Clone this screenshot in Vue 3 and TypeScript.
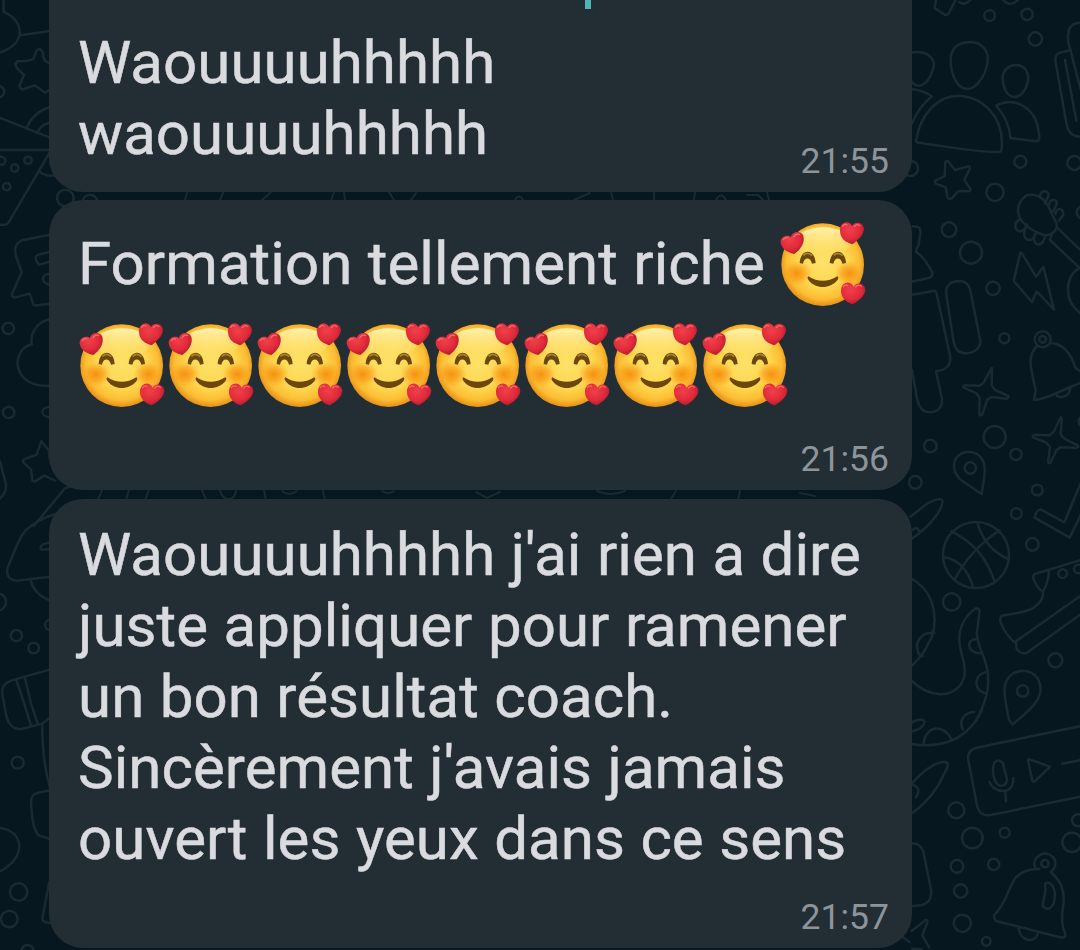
<script setup lang="ts">
interface Message {
  id: string
  lines: string[]
  inlineEmoji: number
  emojiRow: number
  time: string
}

const messages: Message[] = [
  { id: 'first', lines: ['Waouuuuhhhhh', 'waouuuuhhhhh'], inlineEmoji: 0, emojiRow: 0, time: '21:55' },
  { id: 'second', lines: ['Formation tellement riche'], inlineEmoji: 1, emojiRow: 8, time: '21:56' },
  {
    id: 'third',
    lines: [
      "Waouuuuhhhhh j'ai rien a dire",
      'juste appliquer pour ramener',
      'un bon résultat coach.',
      "Sincèrement j'avais jamais",
      'ouvert les yeux dans ce sens',
    ],
    inlineEmoji: 0,
    emojiRow: 0,
    time: '21:57',
  },
]
</script>

<template>
  <main class="chat">
    <svg class="wallpaper" viewBox="0 0 1080 950" aria-hidden="true">
      <defs>
        <radialGradient id="face" gradientUnits="userSpaceOnUse" cx="162" cy="158" r="127">
          <stop offset="0" stop-color="#fde269" />
          <stop offset=".6" stop-color="#fdd64e" />
          <stop offset=".86" stop-color="#fcbd33" />
          <stop offset="1" stop-color="#ea9519" />
        </radialGradient>
        <linearGradient id="shine" x1="0" y1="0" x2="0" y2="1">
          <stop offset="0" stop-color="#fff3b0" />
          <stop offset="1" stop-color="#ffe880" stop-opacity="0" />
        </linearGradient>
        <radialGradient id="cheek">
          <stop offset="0" stop-color="#f58a0c" stop-opacity=".9" />
          <stop offset=".5" stop-color="#f79612" stop-opacity=".6" />
          <stop offset="1" stop-color="#fba625" stop-opacity="0" />
        </radialGradient>
        <radialGradient id="heart" cx=".4" cy=".35" r=".65">
          <stop offset="0" stop-color="#f0404b" />
          <stop offset=".65" stop-color="#e12b3a" />
          <stop offset="1" stop-color="#b91c2f" />
        </radialGradient>
        <symbol id="love-face" viewBox="30 30 267 264">
          <circle cx="161" cy="164" r="124" fill="url(#face)" />
          <ellipse cx="162" cy="96" rx="84" ry="44" fill="url(#shine)" />
          <ellipse cx="84" cy="190" rx="46" ry="38" fill="url(#cheek)" />
          <ellipse cx="240" cy="190" rx="44" ry="38" fill="url(#cheek)" />
          <path d="M92 159C94 116 137 113 140 159L129 161C125 140 105 140 102 161Z M182 159C185 116 228 113 231 159L220 161C216 140 197 140 193 161Z" fill="#68480f" />
          <path d="M103 136Q116 124 130 137M194 136Q207 124 221 137" fill="none" stroke="#a98233" stroke-width="5" />
          <path d="M118 199Q161 226 205 199Q211 202 205 211C183 238 139 238 119 211Q113 202 118 199Z" fill="#6d460c" />
          <g fill="url(#heart)">
            <path d="M66 82C67 63 97 60 103 77C109 98 94 119 76 132C60 128 39 120 35 98C33 79 57 72 66 82Z" />
            <path d="M249 48C257 32 283 36 285 56C284 76 265 92 250 103C232 98 213 86 213 63C211 36 240 28 249 48Z" />
            <path d="M254 230C264 213 287 221 289 239C289 257 266 275 251 283C233 277 215 263 216 242C216 216 244 209 254 230Z" />
          </g>
          <path d="M43 89Q48 80 56 84M74 81Q82 68 92 74M221 49Q226 40 234 45M256 50Q264 39 273 47M223 230Q228 222 236 226M260 231Q268 221 277 229" class="glint" />
        </symbol>
      </defs>

      <!-- right side, people and star -->
      <g transform="translate(900) scale(.33333)">
        <path d="M108 0 104 24 135 45Q145 46 149 36L166 0M178 6Q195 18 211 0M309 0Q330 23 354 0" />
        <circle cx="269" cy="47" r="16" /><circle cx="381" cy="43" r="17" /><circle cx="406" cy="117" r="20" />
        <circle cx="361" cy="485" r="18" /><circle cx="523" cy="489" r="21" /><circle cx="285" cy="577" r="26" /><circle cx="147" cy="689" r="22" /><circle cx="31" cy="505" r="23" /><circle cx="549" cy="637" r="19" />
        <path d="M30 158C82 149 111 176 98 210C91 236 75 257 55 257C39 257 29 240 22 219M208 126C246 126 269 153 262 190C257 221 232 267 202 267C170 266 153 224 152 181C152 147 171 128 208 126ZM348 195C374 195 390 219 383 246C378 272 362 291 343 291C319 290 308 258 308 233C309 209 326 196 348 195Z" />
        <path d="M48 424C60 345 110 287 177 287C255 293 312 354 305 444Q305 457 294 456C211 455 139 439 55 428Q46 426 48 419ZM30 267Q67 269 96 289Q56 321 36 370M288 317C346 286 409 327 416 395Q422 424 408 424L331 414C329 376 315 346 288 317Z" />
        <path d="M136 485Q141 480 147 487L165 510 205 499Q212 500 209 508L193 540 211 566Q212 574 204 574L175 573 154 596Q144 599 142 590L137 562 107 551Q101 545 108 541L134 528Z" />
        <path d="M550 68Q507 66 505 101Q501 115 509 143L512 153 541 265M512 150 480 158Q463 163 467 188L499 369Q505 410 542 410M495 180 529 362" />
        <path d="M378 587C400 579 430 587 448 625Q457 646 469 669C476 697 443 714 418 700C386 686 357 667 354 633Q353 605 378 587ZM419 590C424 565 450 571 445 590L434 611M446 615C450 592 477 598 469 614L459 635M466 642C470 618 495 626 489 646L477 662M363 657C340 665 342 690 358 694 371 696 380 679 382 674M382 674C366 699 372 718 388 720 402 719 407 700 408 696M408 696C396 717 404 735 418 733 432 731 435 710 435 706M471 682 544 753M456 702 450 720 540 805M38 679 55 681Q62 685 61 700L56 734Q48 746 48 755Q77 776 97 818Q98 833 82 835L32 845" />
      </g>

      <!-- bolt, bells, sparkles -->
      <g transform="translate(900 230) scale(.33333)">
        <circle cx="213" cy="68" r="33" /><circle cx="279" cy="175" r="20" /><circle cx="313" cy="325" r="15" /><circle cx="428" cy="328" r="24" /><circle cx="428" cy="328" r="10" /><circle cx="284" cy="621" r="33" /><circle cx="91" cy="648" r="19" /><circle cx="348" cy="673" r="17" /><circle cx="46" cy="757" r="19" /><circle cx="211" cy="714" r="17" /><circle cx="554" cy="574" r="18" />
        <path d="M361 68Q364 67 368 74L408 140 430 110 462 239 410 184 396 216 341 153ZM541 112Q504 133 504 178Q503 222 542 250" />
        <path d="M139 194C135 167 151 154 178 153Q202 153 210 177L240 328C245 352 225 369 200 370 174 371 163 352 160 330ZM32 195 103 182Q110 185 112 200L151 382Q152 408 130 419L108 424 126 506C128 533 111 548 88 547 65 547 56 530 51 505L36 420" />
        <path d="M411 348C377 380 396 425 407 481L402 509Q425 510 470 489L543 457M449 340C487 339 511 366 526 413L544 426M467 491C475 510 510 502 511 473" />
        <path d="M274 416Q277 411 276 421L275 466 285 480 325 498Q326 507 317 506L275 501 262 509 247 553Q240 561 238 550L239 504 229 490 190 472Q188 465 198 466L239 467 251 458Z" />
        <path d="M482 562Q487 560 485 572L482 614 493 626 533 646Q538 653 526 653L481 652 469 661 451 699Q443 703 445 690L450 651 438 637 399 622Q396 614 408 614L449 616 462 604Z" />
        <path d="M165 727C155 689 174 665 210 666 244 668 259 699 253 739L245 793 179 747Z" />
      </g>

      <!-- ball, boot, tentacle -->
      <g transform="translate(900 480) scale(.33333)">
        <circle cx="349" cy="101" r="16" /><circle cx="412" cy="30" r="16" /><circle cx="397" cy="193" r="19" /><circle cx="155" cy="366" r="26" /><circle cx="466" cy="541" r="21" /><circle cx="368" cy="633" r="17" /><circle cx="228" cy="225" r="99" />
        <path d="M154 154Q248 198 283 302M232 127Q252 203 324 237M299 151Q210 210 163 300M133 232Q195 241 220 323M31 110 83 70Q115 53 126 59C131 66 121 88 112 103Q76 151 35 176M35 152Q50 137 57 153" />
        <path d="M36 297C114 341 117 445 84 492Q73 521 36 557M103 459C63 455 40 488 57 523L68 528M36 603C88 652 149 655 182 614 214 566 174 519 178 473 179 434 202 403 228 385Q242 385 238 402L230 461C236 516 263 535 264 592Q269 644 230 718M231 477C199 475 198 519 240 520M255 577C222 586 218 630 258 641" />
        <path d="M541 12 493 127 423 89Q413 86 403 112L509 173 542 105M543 240 404 282Q397 287 401 298Q410 323 429 335Q446 304 447 272M429 335C430 363 412 376 394 387 372 397 337 402 306 407Q298 411 302 427Q312 457 343 487L542 347M348 487 350 506Q363 524 380 519L542 403" />
        <circle cx="488" cy="281" r="13" /><circle cx="535" cy="267" r="13" />
        <path d="M338 734 327 720C320 684 311 648 314 618 322 585 346 571 375 573 406 576 424 601 421 635 417 670 379 697 338 734Z" />
      </g>

      <!-- voice note, bell -->
      <g transform="translate(900 710) scale(.33333)">
        <path d="M32 102C133 118 208 82 246 0M70 104C76 42 135 41 155 91M34 38Q66 21 74 35 72 55 37 64M189 58C174 31 194 7 222 6M35 221C66 188 97 159 131 155 145 155 148 166 134 188 110 242 80 279 37 309M36 223Q67 234 48 262" />
        <path d="M542 48 227 114Q200 124 205 150L232 292Q243 321 272 315L542 260M283 158Q295 145 308 158L321 208C320 226 307 229 299 227 279 219 275 178 283 158M269 216C277 247 342 261 340 204M316 246 318 274M384 150Q384 146 391 149L450 170 402 216 397 212ZM486 161 541 151" />
        <circle cx="169" cy="301" r="24" /><circle cx="217" cy="384" r="31" /><circle cx="314" cy="368" r="15" /><circle cx="281" cy="463" r="17" /><circle cx="171" cy="469" r="19" /><circle cx="182" cy="543" r="20" /><circle cx="187" cy="640" r="26" /><circle cx="259" cy="694" r="13" /><circle cx="516" cy="397" r="29" /><circle cx="534" cy="331" r="18" /><circle cx="435" cy="461" r="11" />
        <path d="M35 400Q62 399 70 426L93 538Q98 577 66 585L36 589M406 475C392 440 435 418 456 439 474 454 465 478 452 486C482 510 495 540 490 583 483 623 486 651 496 673Q496 685 480 682L289 633Q278 620 283 614C314 588 325 537 343 508 361 485 384 476 418 477M436 520C454 511 468 539 464 564 462 593 443 604 430 590 424 579 442 546 435 527ZM356 655C359 695 407 702 414 670M35 663 77 630Q86 630 80 643L67 676 88 713M10 682 28 696M36 716 64 718" />
      </g>

      <!-- left edge -->
      <g transform="scale(.33333)">
        <path d="M11 0V36C70 59 84 130 0 157M61 106 150 93M150 190Q127 184 129 158 120 140 111 151L99 178Q79 185 52 184 42 193 51 204L72 225 58 257Q60 271 72 267L104 256 136 278 147 270M0 354 150 413M79 387Q97 338 150 321M112 399Q120 377 145 369M0 450H148M148 459 29 662Q23 674 13 674H0M118 514Q137 531 164 526" />
        <circle cx="-4" cy="275" r="17" /><circle cx="84" cy="481" r="11" /><circle cx="44" cy="504" r="11" /><circle cx="20" cy="560" r="11" /><circle cx="4" cy="482" r="12" /><circle cx="196" cy="594" r="25" /><circle cx="270" cy="606" r="22" />
        <path d="M150 704 65 721C42 733 42 752 52 780L65 817 38 877Q33 889 42 893L89 881 99 910Q100 918 112 916L151 911M150 756 119 763Q103 766 109 782L116 794 151 785M151 822C122 820 122 849 150 855" />
      </g>
      <g transform="translate(0 310) scale(.33333)">
        <path d="M151 27C113 34 90 67 95 103 57 112 44 157 59 185 69 213 105 230 151 227M150 291C120 291 119 319 150 322M0 454 17 519Q22 545 0 566M124 394 146 421 149 445M124 394 110 434 75 447Q67 449 70 457L93 479 97 511 104 515 133 497 165 512M102 647 194 536 213 528M167 612Q118 624 77 661C58 682 49 710 25 768 17 788 22 810 49 812L150 800M151 696 127 704Q118 713 125 719L147 718M91 810Q103 854 151 872" />
        <circle cx="25" cy="55" r="17" /><circle cx="26" cy="307" r="17" /><circle cx="-8" cy="876" r="26" /><circle cx="150" cy="945" r="15" />
      </g>
      <g transform="translate(0 630) scale(.33333)">
        <circle cx="49" cy="17" r="17" /><circle cx="101" cy="54" r="16" /><circle cx="53" cy="398" r="18" /><circle cx="56" cy="786" r="26" /><circle cx="28" cy="867" r="25" /><circle cx="83" cy="963" r="18" />
        <path d="M151 118 33 152Q0 163 8 199L19 257C26 286 43 300 65 297L128 280 150 263M50 153 74 225 92 283M75 145 93 220 113 280M127 282Q126 393 151 477M150 481 112 489C92 495 91 512 95 544 97 581 106 606 117 617L151 627M0 594C76 604 78 685 0 724M148 755 127 865Q127 878 150 879" />
      </g>

      <!-- fragments between bubbles -->
      <path d="M187 193 185 200M223 193 220 200M271 192 262 200M334 192 331 200M344 192 345 200M389 192 394 200M416 193 411 200M515 200Q519 193 523 200M574 200 590 193M611 192 613 200M654 192V200M695 192 694 200M716 200Q721 191 726 200M747 195H758L763 200M767 192 769 200" />
      <path d="M102 490 98 500M129 490 126 500M149 490 145 500M202 490 206 500M220 490C222 502 236 502 236 490M264 490 266 500M282 491Q289 497 297 491M323 491 325 500M382 491Q388 495 394 491M476 492 487 498 500 492M597 491Q610 497 625 491M676 491 670 500M740 491 738 500M800 493 815 496" />
    </svg>

    <section class="conversation">
      <article v-for="message in messages" :key="message.id" class="bubble" :class="message.id">
        <i v-if="message.id === 'first'" class="link-stem"></i>
        <div v-for="line in message.lines" :key="line" class="line">
          <span>{{ line }}</span>
          <svg v-for="n in message.inlineEmoji" :key="n" class="emoji" role="img" aria-label="🥰"><use href="#love-face" /></svg>
        </div>
        <div v-if="message.emojiRow" class="emoji-row">
          <svg v-for="n in message.emojiRow" :key="n" class="emoji" role="img" aria-label="🥰"><use href="#love-face" /></svg>
        </div>
        <time>{{ message.time }}</time>
      </article>
    </section>
  </main>
</template>

<style>
body {
  margin: 0;
  background: #06171f;
  overflow: hidden;
}
</style>

<style scoped>
.chat {
  position: relative;
  width: 1080px;
  height: 950px;
  overflow: hidden;
  background: #06171f;
  font-family: Roboto, sans-serif;
}
.wallpaper {
  position: absolute;
  inset: 0;
  width: 1080px;
  height: 950px;
}
.wallpaper > g,
.wallpaper > path {
  fill: none;
  stroke: #1a2a31;
  stroke-width: 7.5;
  stroke-linecap: round;
  stroke-linejoin: round;
}
.wallpaper > path {
  stroke-width: 2;
}
.glint {
  fill: none;
  stroke: #ff8a88;
  stroke-width: 4;
  stroke-linecap: round;
  opacity: .65;
}
.conversation {
  position: relative;
  width: 863px;
  margin-left: 49px;
  display: flex;
  flex-direction: column;
  gap: 8px;
}
.bubble {
  position: relative;
  box-sizing: border-box;
  padding: 0 24px 0 29px;
  background: #222d34;
  border-radius: 34px;
  color: #d9dbde;
}
.first {
  height: 192px;
  padding-top: 26.5px;
  border-radius: 0 0 34px 34px;
}
.second {
  height: 290px;
  padding-top: 28px;
}
.third {
  height: 449px;
  margin-top: 1px;
  padding-top: 20px;
}
.line {
  display: flex;
  align-items: center;
  height: 71px;
  font-size: 60px;
  line-height: 71px;
  letter-spacing: .05px;
  word-spacing: .5px;
  -webkit-text-stroke: .5px currentColor;
  white-space: nowrap;
}
.emoji {
  flex: none;
  display: block;
  width: 89px;
  height: 88px;
}
.line .emoji {
  margin-left: 14px;
}
.emoji-row {
  display: flex;
  margin-top: 22px;
}
time {
  position: absolute;
  right: 23px;
  bottom: 10px;
  color: #8d959b;
  font-size: 35.5px;
  line-height: 42px;
}
.link-stem {
  position: absolute;
  left: 536px;
  top: 0;
  width: 6px;
  height: 9px;
  background: #4eb5b5;
}
</style>
